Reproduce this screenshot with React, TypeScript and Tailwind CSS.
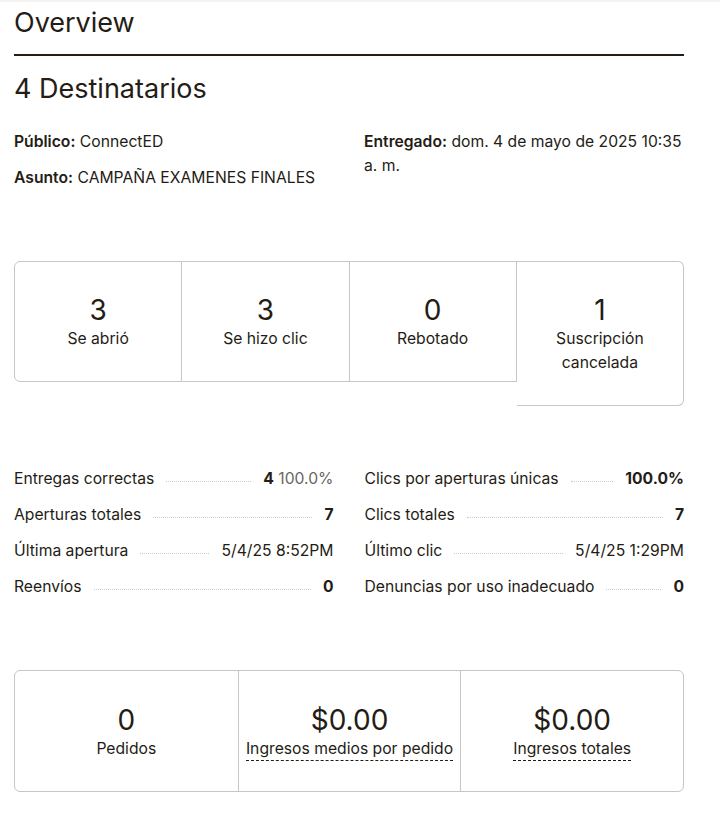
import React from "react"

// ─── Data ─────────────────────────────────────────────────────────────────────

const topStats = [
  { value: "3", label: "Se abrió" },
  { value: "3", label: "Se hizo clic" },
  { value: "0", label: "Rebotado" },
  { value: "1", label: "Suscripción cancelada" },
]

interface Row {
  label: string
  value: React.ReactNode
}

const leftRows: Row[] = [
  {
    label: "Entregas correctas",
    value: (
      <>
        <span className="font-bold">4</span>{" "}
        <span className="text-[#6b6560]">100.0%</span>
      </>
    ),
  },
  { label: "Aperturas totales", value: <span className="font-bold">7</span> },
  { label: "Última apertura", value: "5/4/25 8:52PM" },
  { label: "Reenvíos", value: <span className="font-bold">0</span> },
]

const rightRows: Row[] = [
  { label: "Clics por aperturas únicas", value: <span className="font-bold">100.0%</span> },
  { label: "Clics totales", value: <span className="font-bold">7</span> },
  { label: "Último clic", value: "5/4/25 1:29PM" },
  { label: "Denuncias por uso inadecuado", value: <span className="font-bold">0</span> },
]

// ─── Pieces ───────────────────────────────────────────────────────────────────

function StatRow({ label, value }: Row) {
  return (
    <div className="flex items-baseline h-9">
      <span className="whitespace-nowrap">{label}</span>
      <span className="flex-1 mx-3 border-b border-dotted border-[#cfcac5] translate-y-[-2px]" />
      <span className="whitespace-nowrap">{value}</span>
    </div>
  )
}

// ─── Page ─────────────────────────────────────────────────────────────────────

export default function App() {
  return (
    <div
      className="w-[720px] min-h-[819px] bg-white text-[#241c15] border-t-2 border-[#f4f3f1]"
      style={{ fontFamily: "Inter, 'Liberation Sans', sans-serif" }}
    >
      <div className="px-[14px] pr-[36px]">
        {/* Header */}
        <h1 className="text-[27px] leading-[40px] pt-[1px] pb-[11px] border-b-2 border-[#241c15]">
          Overview
        </h1>

        <h2 className="text-[27px] leading-[34px] mt-[16px]">4 Destinatarios</h2>

        {/* Campaign meta */}
        <div className="flex gap-x-[25px] mt-[24px] text-[15.7px] leading-[24px]">
          <div className="flex-1">
            <p>
              <span className="font-semibold">Público:</span> ConnectED
            </p>
            <p className="mt-[12px]">
              <span className="font-semibold">Asunto:</span> CAMPAÑA EXAMENES FINALES
            </p>
          </div>
          <div className="w-[320px]">
            <p>
              <span className="font-semibold">Entregado:</span> dom. 4 de mayo de 2025 10:35 a. m.
            </p>
          </div>
        </div>

        {/* Top stat cards */}
        <div className="flex items-start mt-[71px]">
          {topStats.map((s, i) => (
            <div
              key={s.label}
              className={
                "flex-1 flex flex-col items-center px-4 pt-[31px] pb-[30px] border-t border-b border-r border-[#c8c6c4] " +
                (i === 0 ? "border-l rounded-l-md " : "") +
                (i === topStats.length - 1 ? "rounded-r-md" : "")
              }
            >
              <span className="text-[28px] leading-[34px]">{s.value}</span>
              <span className="text-[15.7px] leading-[24px] text-center">{s.label}</span>
            </div>
          ))}
        </div>

        {/* Detailed rows */}
        <div className="grid grid-cols-2 gap-x-[31px] mt-[61px] text-[15.7px]">
          <div>
            {leftRows.map((r) => (
              <StatRow key={r.label} {...r} />
            ))}
          </div>
          <div>
            {rightRows.map((r) => (
              <StatRow key={r.label} {...r} />
            ))}
          </div>
        </div>

        {/* Ecommerce cards */}
        <div className="grid grid-cols-3 mt-[59px] border border-[#c8c6c4] rounded-md">
          <div className="flex flex-col items-center pt-[32px] pb-[30px] h-[120px]">
            <span className="text-[28px] leading-[34px]">0</span>
            <span className="text-[15.7px] leading-[24px]">Pedidos</span>
          </div>
          <div className="flex flex-col items-center pt-[32px] pb-[30px] border-l border-[#c8c6c4]">
            <span className="text-[28px] leading-[34px]">$0.00</span>
            <span className="text-[15.7px] leading-[23px] border-b border-dashed border-[#241c15]">
              Ingresos medios por pedido
            </span>
          </div>
          <div className="flex flex-col items-center pt-[32px] pb-[30px] border-l border-[#c8c6c4]">
            <span className="text-[28px] leading-[34px]">$0.00</span>
            <span className="text-[15.7px] leading-[23px] border-b border-dashed border-[#241c15]">
              Ingresos totales
            </span>
          </div>
        </div>
      </div>
    </div>
  )
}
